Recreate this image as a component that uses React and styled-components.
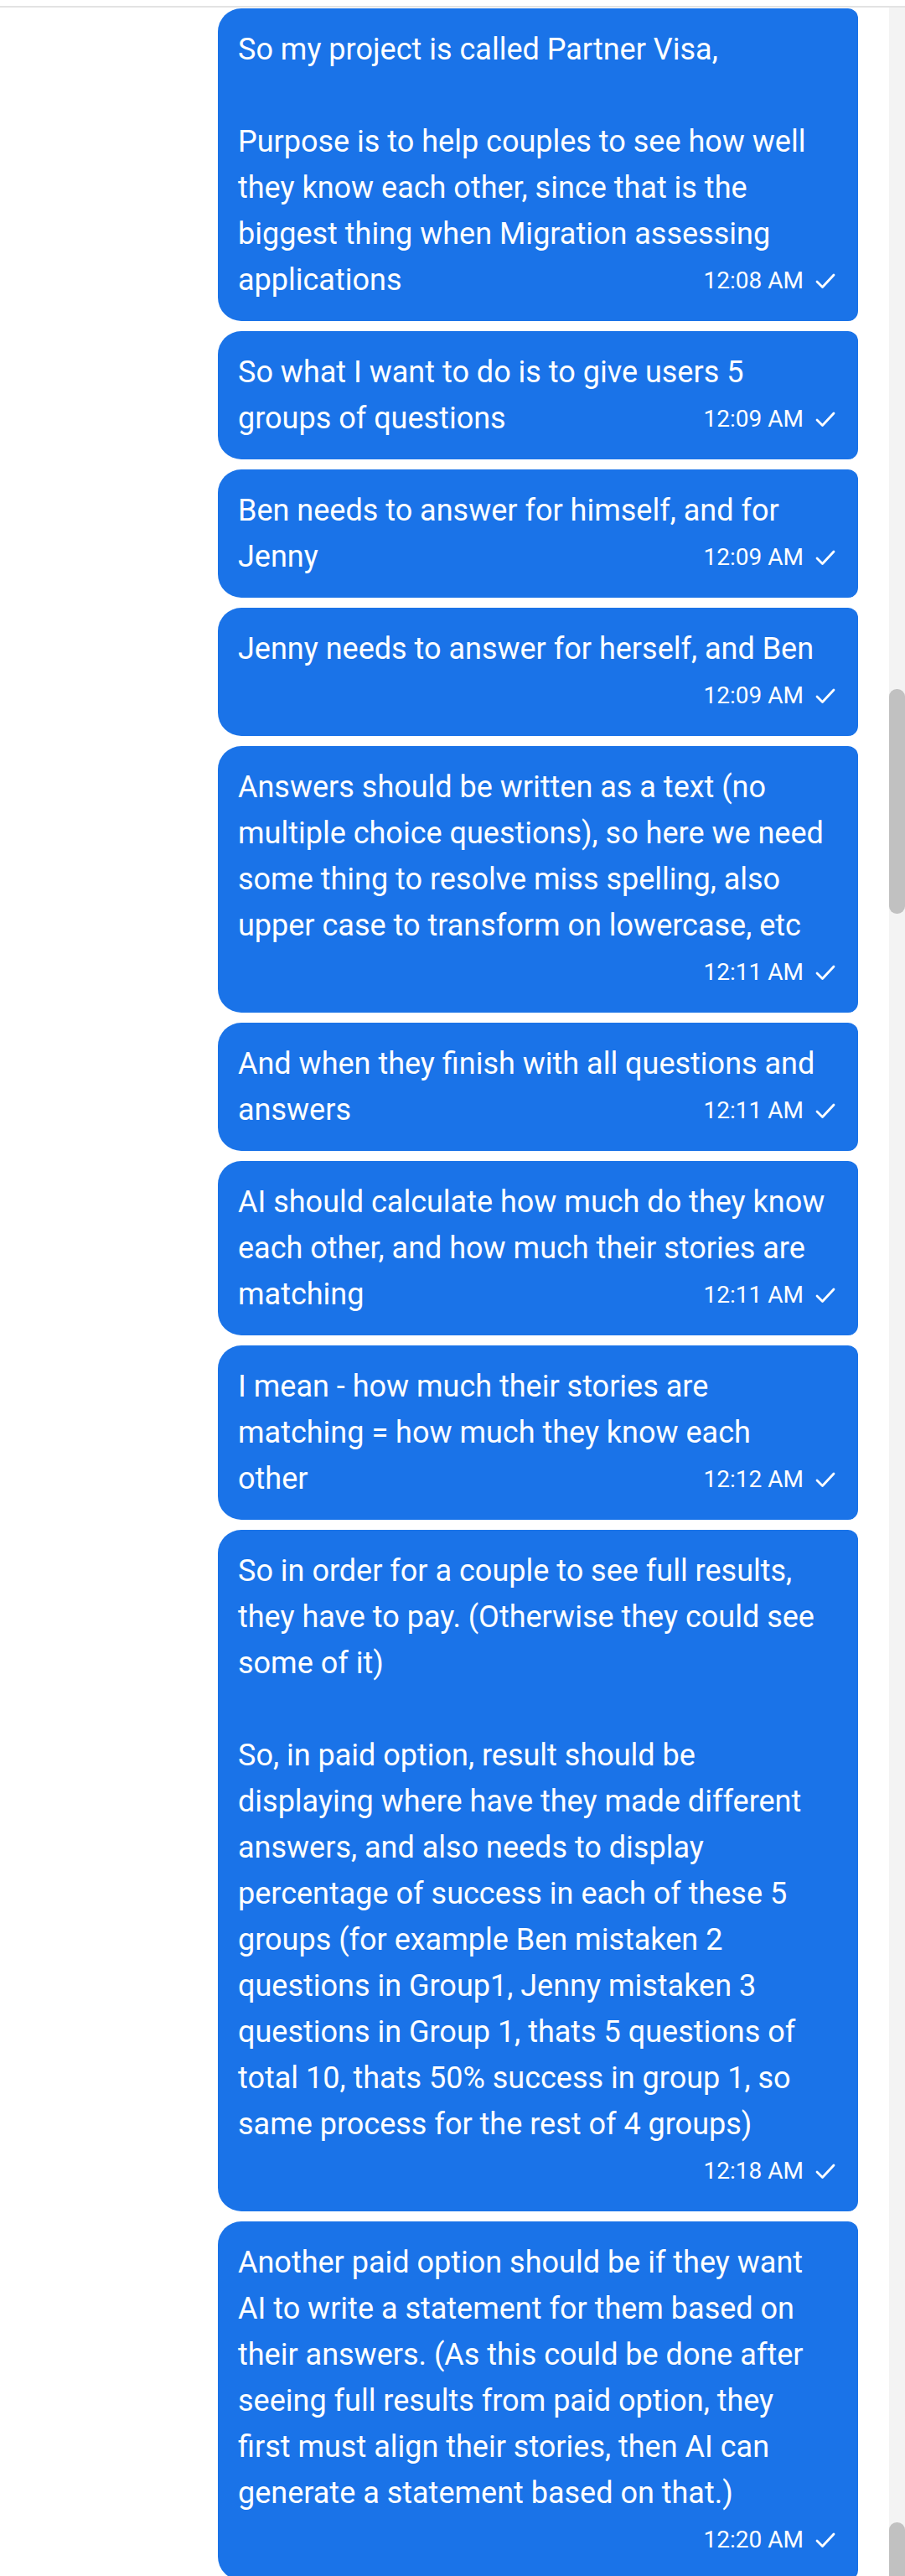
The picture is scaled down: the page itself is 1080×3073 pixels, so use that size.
import React from 'react';
import styled, { createGlobalStyle, css } from 'styled-components';

const GlobalStyle = createGlobalStyle`
  html, body {
    margin: 0;
    padding: 0;
    background: #ffffff;
  }
  body {
    font-family: Roboto, "Noto Sans", "Liberation Sans", sans-serif;
  }
`;

const Page = styled.div`
  width: 1080px;
  height: 3073px;
  overflow: hidden;
  display: flex;
  flex-direction: column;
  background: #fff;
`;

const TopBar = styled.div`
  height: 7px;
  flex-shrink: 0;
  border-bottom: 2px solid #e3e3e3;
`;

const Main = styled.div`
  flex: 1;
  display: flex;
  min-height: 0;
`;

const Thread = styled.div`
  flex: 1;
  display: flex;
  flex-direction: column;
  gap: 12px;
  padding: 1px 37px 0 260px;
`;

const Bubble = styled.div`
  background: #1a73e8;
  color: #fff;
  border-radius: 28px 12px 12px 28px;
  padding: 22px 27px 21px 24px;
  font-size: 36px;
  line-height: 55px;
  flex-shrink: 0;
`;

const Line = styled.div`
  white-space: pre;
  min-height: 55px;
`;

const LastRow = styled.div`
  display: flex;
  align-items: center;
  justify-content: ${({ alone }) => (alone ? 'flex-end' : 'space-between')};
  min-height: 55px;
`;

const Meta = styled.span`
  display: inline-flex;
  align-items: center;
  gap: 14px;
  font-size: 28px;
  line-height: 55px;
  margin-left: auto;
`;

const ScrollTrack = styled.div`
  width: 19px;
  flex-shrink: 0;
  background: #f3f3f3;
  display: flex;
  flex-direction: column;
`;

const Thumb = styled.div`
  background: #c1c1c1;
  border-radius: 9px;
  margin-top: 813px;
  height: 268px;

  ${({ tail }) =>
    tail &&
    css`
      margin-top: auto;
      height: 64px;
      border-radius: 9px 9px 0 0;
    `}
`;

const Check = () => (
  <svg width="24" height="20" viewBox="0 0 24 20" fill="none">
    <polyline
      points="2,11 8.5,17.5 22,3"
      stroke="#fff"
      strokeWidth="2.8"
      strokeLinecap="round"
      strokeLinejoin="round"
    />
  </svg>
);

const messages = [
  {
    lines: [
      'So my project is called Partner Visa,',
      '',
      'Purpose is to help couples to see how well',
      'they know each other, since that is the',
      'biggest thing when Migration assessing',
      'applications',
    ],
    time: '12:08 AM',
  },
  {
    lines: ['So what I want to do is to give users 5', 'groups of questions'],
    time: '12:09 AM',
  },
  {
    lines: ['Ben needs to answer for himself, and for', 'Jenny'],
    time: '12:09 AM',
  },
  {
    lines: ['Jenny needs to answer for herself, and Ben'],
    time: '12:09 AM',
    alone: true,
  },
  {
    lines: [
      'Answers should be written as a text (no',
      'multiple choice questions), so here we need',
      'some thing to resolve miss spelling, also',
      'upper case to transform on lowercase, etc',
    ],
    time: '12:11 AM',
    alone: true,
  },
  {
    lines: ['And when they finish with all questions and', 'answers'],
    time: '12:11 AM',
  },
  {
    lines: [
      'AI should calculate how much do they know',
      'each other, and how much their stories are',
      'matching',
    ],
    time: '12:11 AM',
  },
  {
    lines: ['I mean - how much their stories are', 'matching = how much they know each', 'other'],
    time: '12:12 AM',
  },
  {
    lines: [
      'So in order for a couple to see full results,',
      'they have to pay. (Otherwise they could see',
      'some of it)',
      '',
      'So, in paid option, result should be',
      'displaying where have they made different',
      'answers, and also needs to display',
      'percentage of success in each of these 5',
      'groups (for example Ben mistaken 2',
      'questions in Group1, Jenny mistaken 3',
      'questions in Group 1, thats 5 questions of',
      'total 10, thats 50% success in group 1, so',
      'same process for the rest of 4 groups)',
    ],
    time: '12:18 AM',
    alone: true,
  },
  {
    lines: [
      'Another paid option should be if they want',
      'AI to write a statement for them based on',
      'their answers. (As this could be done after',
      'seeing full results from paid option, they',
      'first must align their stories, then AI can',
      'generate a statement based on that.)',
    ],
    time: '12:20 AM',
    alone: true,
  },
];

const Message = ({ lines, time, alone }) => {
  const body = alone ? lines : lines.slice(0, -1);
  const last = alone ? null : lines[lines.length - 1];
  return (
    <Bubble>
      {body.map((text, i) => (
        <Line key={i}>{text}</Line>
      ))}
      <LastRow alone={alone}>
        {last && <span>{last}</span>}
        <Meta>
          {time}
          <Check />
        </Meta>
      </LastRow>
    </Bubble>
  );
};

const App = () => (
  <Page>
    <GlobalStyle />
    <TopBar />
    <Main>
      <Thread>
        {messages.map((m, i) => (
          <Message key={i} {...m} />
        ))}
      </Thread>
      <ScrollTrack>
        <Thumb />
        <Thumb tail />
      </ScrollTrack>
    </Main>
  </Page>
);

export default App;
